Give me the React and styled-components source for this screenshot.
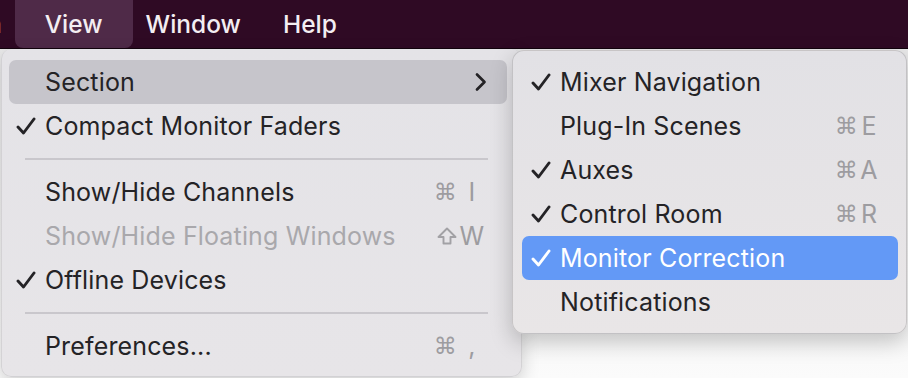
import React from "react";
import styled, {createGlobalStyle} from "styled-components";

const GlobalStyle = createGlobalStyle`
html, body {
    margin: 0;
    padding: 0;
    background: #f4f4f4;
}
`;

const Page = styled.div`
width: 908px;
height: 378px;
overflow: hidden;
display: flex;
flex-direction: column;
background: linear-gradient(180deg, #e6e6e7 0%, #f2f2f2 60%, #fbfbfb 100%);
font-family: "Inter", "Liberation Sans", sans-serif;
`;

const MenuBar = styled.div`
height: 48px;
flex-shrink: 0;
display: flex;
align-items: stretch;
background: #2f0a24;
border-bottom: 1px solid #12030d;
color: #f3eef2;
font-size: 24.5px;
font-weight: 500;
overflow: hidden;
`;

const BarItem = styled.div`
display: flex;
align-items: center;
padding: 0 21px;
margin-left: ${(p) => p.$shift || 0}px;
${(p) => p.$active && `
    padding: 0 30px;
    margin: 0 -8px;
    background: #4f2a48;
    border-radius: 0 0 8px 8px;
`}
`;

const Menus = styled.div`
display: flex;
align-items: flex-start;
`;

const Menu = styled.div`
width: 521px;
margin-left: 1px;
flex-shrink: 0;
box-sizing: border-box;
padding: 11px 0 8px;
background: linear-gradient(180deg, #e4e3e7 0%, #e7e5e8 100%);
border: 1px solid rgba(0, 0, 0, 0.08);
border-top: none;
border-radius: 10px;
box-shadow: 0 6px 18px rgba(0, 0, 0, 0.18);
`;

const SubMenu = styled.div`
width: 395px;
margin: 1px 0 0 -10px;
flex-shrink: 0;
position: relative;
z-index: 1;
box-sizing: border-box;
padding: 9px 0 9px;
background: linear-gradient(180deg, #e2e1e5 0%, #e9e6e7 100%);
border: 1px solid rgba(0, 0, 0, 0.14);
border-radius: 12px;
box-shadow: 0 8px 22px rgba(0, 0, 0, 0.22);
`;

const Row = styled.div`
height: 44px;
display: flex;
align-items: center;
margin: ${(p) => (p.$sub ? "0 8px 0 9px" : "0 14px 0 7px")};
padding-right: ${(p) => (p.$sub ? 18 : 20)}px;
border-radius: 7px;
font-size: 25px;
letter-spacing: 0.15px;
color: ${(p) => (p.$selected ? "#ffffff" : p.$disabled ? "#a9a8ac" : "#242326")};
background: ${(p) => (p.$selected ? "#6399f6" : p.$hover ? "#c6c5cb" : "transparent")};
`;

const CheckCell = styled.div`
width: ${(p) => (p.$sub ? 38 : 36)}px;
flex-shrink: 0;
display: flex;
align-items: center;
padding-left: ${(p) => (p.$sub ? 9 : 7)}px;
box-sizing: border-box;
`;

const Label = styled.span`
flex: 1;
white-space: nowrap;
`;

const Shortcut = styled.span`
display: flex;
align-items: center;
color: ${(p) => (p.$selected ? "#ffffff" : "#9d9ca0")};
`;

const Mod = styled.span`
display: flex;
align-items: center;
font-family: "DejaVu Sans", sans-serif;
font-size: 23px;
`;

const Key = styled.span`
width: ${(p) => p.$w}px;
text-align: center;
font-size: 25px;
`;

const Separator = styled.div`
height: 22px;
display: flex;
align-items: center;
padding: 0 33px 0 23px;
&::after {
    content: "";
    flex: 1;
    height: 1.5px;
    background: #c9c7cc;
}
`;

const Check = ({color}) => (
    <svg width="20" height="18" viewBox="0 0 20 18">
        <path d="M2 10 L7.5 16 L18 2" fill="none" stroke={color} strokeWidth="2.9" strokeLinecap="round" strokeLinejoin="round"/>
    </svg>
);

const Chevron = () => (
    <svg width="14" height="20" viewBox="0 0 14 20">
        <path d="M4 2.5 L11.5 10 L4 17.5" fill="none" stroke="#242326" strokeWidth="2.7" strokeLinecap="round" strokeLinejoin="round"/>
    </svg>
);

const ShiftIcon = () => (
    <svg width="20" height="18" viewBox="0 0 20 18">
        <path d="M10 1.5 L18.5 10 L13.5 10 L13.5 16.5 L6.5 16.5 L6.5 10 L1.5 10 Z" fill="none" stroke="#a2a1a5" strokeWidth="1.9" strokeLinejoin="round"/>
    </svg>
);

const mainItems = [
    {label: "Section", hover: true, submenu: true},
    {label: "Compact Monitor Faders", checked: true},
    {sep: true},
    {label: "Show/Hide Channels", mod: "⌘", key: "I"},
    {label: "Show/Hide Floating Windows", mod: "shift", key: "W", disabled: true},
    {label: "Offline Devices", checked: true},
    {sep: true},
    {label: "Preferences...", mod: "⌘", key: ","},
];

const subItems = [
    {label: "Mixer Navigation", checked: true},
    {label: "Plug-In Scenes", mod: "⌘", key: "E"},
    {label: "Auxes", checked: true, mod: "⌘", key: "A"},
    {label: "Control Room", checked: true, mod: "⌘", key: "R"},
    {label: "Monitor Correction", checked: true, selected: true},
    {label: "Notifications"},
];

const MenuRow = ({item, sub}) => (
    <Row $sub={sub} $hover={item.hover} $selected={item.selected} $disabled={item.disabled}>
        <CheckCell $sub={sub}>
            {item.checked && <Check color={item.selected ? "#ffffff" : "#242326"}/>}
        </CheckCell>
        <Label>{item.label}</Label>
        {item.submenu && <Chevron/>}
        {item.mod && (
            <Shortcut $selected={item.selected}>
                <Mod>{item.mod === "shift" ? <ShiftIcon/> : item.mod}</Mod>
                <Key $w={sub ? 22 : 30}>{item.key}</Key>
            </Shortcut>
        )}
    </Row>
);

const App = () => {
    return (
        <>
            <GlobalStyle/>
            <Page>
                <MenuBar>
                    <BarItem $shift={-34}>n</BarItem>
                    <BarItem $active>View</BarItem>
                    <BarItem>Window</BarItem>
                    <BarItem>Help</BarItem>
                </MenuBar>
                <Menus>
                    <Menu>
                        {mainItems.map((item, i) => item.sep ? <Separator key={i}/> : <MenuRow key={i} item={item}/>)}
                    </Menu>
                    <SubMenu>
                        {subItems.map((item, i) => <MenuRow key={i} item={item} sub/>)}
                    </SubMenu>
                </Menus>
            </Page>
        </>
    );
};

export default App;
